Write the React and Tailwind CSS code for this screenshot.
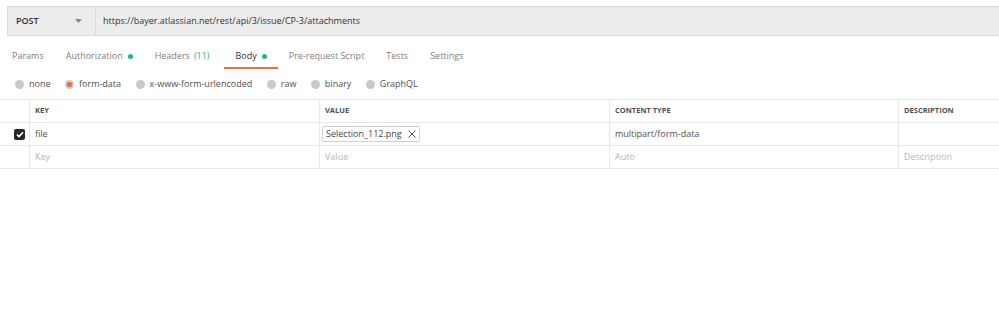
import React from 'react'

const font = { fontFamily: '"Open Sans", "Noto Sans", sans-serif' }

function Dot() {
  return <span className="ml-[5px] inline-block w-[5px] h-[5px] rounded-full bg-[#26b47f]" />
}

function Tab({ children, active }) {
  return (
    <div className={`relative flex items-center h-[24px] px-[11px] ${active ? 'text-[#333]' : 'text-[#808080]'}`}>
      {children}
      {active && <span className="absolute left-0 right-0 bottom-[-1px] h-[2px] bg-[#f26b3a]" />}
    </div>
  )
}

function Radio({ label, checked }) {
  return (
    <div className="flex items-center gap-[5px] mr-[14.5px]">
      <span className="w-[9px] h-[9px] rounded-full bg-[#c9c9c9] flex items-center justify-center">
        {checked && <span className="w-[5px] h-[5px] rounded-full bg-[#f26b3a]" />}
      </span>
      <span className="text-[#505050]">{label}</span>
    </div>
  )
}

export default function App() {
  const cell = 'border-r border-[#e8e8e8] pl-[5px] flex items-center'
  const cols = 'grid grid-cols-[30px_290px_290px_289px_1fr]'

  return (
    <div className="w-[999px] h-[331px] bg-white text-[9px] overflow-hidden" style={font}>
      {/* request bar */}
      <div className="pl-[7px] pt-[6px]">
        <div className="flex h-[30px] bg-[#ececec] border border-r-0 border-[#dadada]">
          <div className="w-[88px] flex items-center justify-between pl-[8px] pr-[13px] border-r border-[#dadada] text-[#333] font-semibold">
            POST
            <svg width="7" height="4" viewBox="0 0 7 4"><path d="M0 0h7L3.5 4z" fill="#888" /></svg>
          </div>
          <div className="flex items-center pl-[7px] text-[#333]">https://bayer.atlassian.net/rest/api/3/issue/CP-3/attachments</div>
        </div>
      </div>

      {/* tabs */}
      <div className="flex mt-[8px] pl-[1px]">
        <Tab>Params</Tab>
        <Tab>Authorization<Dot /></Tab>
        <Tab>Headers<span className="ml-[4px] mr-[4px] text-[#26b47f]">(11)</span></Tab>
        <Tab active>Body<Dot /></Tab>
        <Tab>Pre-request Script</Tab>
        <Tab>Tests</Tab>
        <Tab>Settings</Tab>
      </div>

      {/* body types */}
      <div className="flex items-center h-[20px] mt-[6px] pl-[15px]">
        <Radio label="none" />
        <Radio label="form-data" checked />
        <Radio label="x-www-form-urlencoded" />
        <Radio label="raw" />
        <Radio label="binary" />
        <Radio label="GraphQL" />
      </div>

      {/* table */}
      <div className="mt-[5px] border-t border-[#e8e8e8]">
        <div className={`${cols} h-[23px] border-b border-[#e8e8e8] text-[7.5px] font-bold text-[#505050]`}>
          <div className={cell} />
          <div className={cell}>KEY</div>
          <div className={cell}>VALUE</div>
          <div className={cell}>CONTENT TYPE</div>
          <div className="pl-[5px] flex items-center">DESCRIPTION</div>
        </div>
        <div className={`${cols} h-[23px] border-b border-[#e8e8e8] text-[#505050]`}>
          <div className={`${cell} justify-end pr-[4px]`}>
            <span className="w-[11px] h-[11px] rounded-[2px] bg-[#282828] flex items-center justify-center">
              <svg width="8" height="7" viewBox="0 0 8 7"><path d="M1 3.6l2 2L7 1.2" stroke="#fff" strokeWidth="1.6" fill="none" /></svg>
            </span>
          </div>
          <div className={cell}>file</div>
          <div className="border-r border-[#e8e8e8] pl-[2px] flex items-center">
            <span className="flex items-center h-[16px] px-[3px] border border-[#cfcfcf] rounded-[2px] text-[#444]">
              Selection_112.png
              <svg className="ml-[6px]" width="8" height="8" viewBox="0 0 8 8"><path d="M.5.5l7 7M7.5.5l-7 7" stroke="#555" strokeWidth="1" /></svg>
            </span>
          </div>
          <div className={cell}>multipart/form-data</div>
          <div />
        </div>
        <div className={`${cols} h-[23px] border-b border-[#e8e8e8] text-[#b5b5b5]`}>
          <div className={cell} />
          <div className={cell}>Key</div>
          <div className={cell}>Value</div>
          <div className={cell}>Auto</div>
          <div className="pl-[5px] flex items-center">Description</div>
        </div>
      </div>
    </div>
  )
}
